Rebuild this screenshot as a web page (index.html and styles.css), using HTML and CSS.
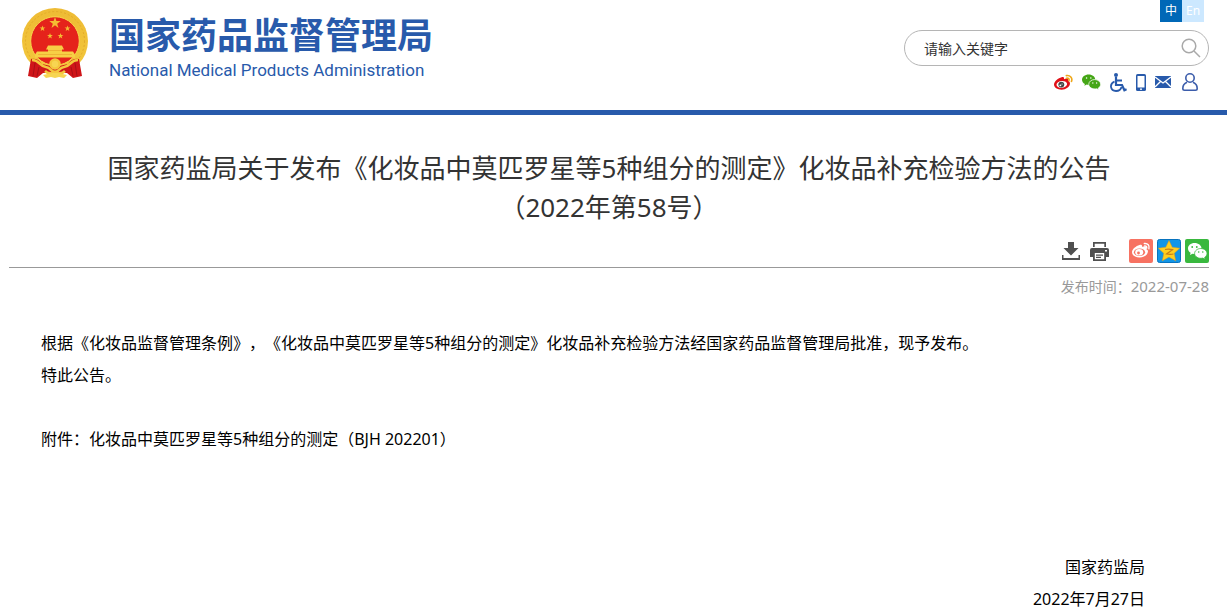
FILE: index.html
```html
<!DOCTYPE html>
<html lang="zh-CN">
<head>
<meta charset="utf-8">
<meta name="viewport" content="width=device-width, initial-scale=1">
<title>国家药品监督管理局</title>
<link rel="stylesheet" href="styles.css">
</head>
<body>
<header class="site-header">
  <a class="brand" href="#">
    <svg class="emblem" viewBox="0 0 66 71" aria-hidden="true">
      <defs>
        <linearGradient id="gold" x1="0" y1="0" x2="0" y2="1"><stop offset="0" stop-color="#eebb34"/><stop offset="1" stop-color="#f3c83c"/></linearGradient>
        <path id="star" d="M0-6 1.4-1.9H5.7L2.2.7 3.5 4.9 0 2.3-3.5 4.9-2.2.7-5.7-1.9H-1.4Z"/>
      </defs>
      <circle cx="33" cy="33" r="33" fill="url(#gold)"/>
      <circle cx="33" cy="33" r="29.5" fill="none" stroke="#e3ab2a" stroke-width="1" stroke-dasharray="2 2"/>
      <circle cx="33" cy="33" r="24.3" fill="#e5231b" stroke="#f7d64b" stroke-width="1"/>
      <g fill="#f4bd32">
        <use href="#star" transform="translate(33 15)"/>
        <use href="#star" transform="translate(20.5 20.500) scale(.52)"/>
        <use href="#star" transform="translate(45.500 20.500) scale(.52)"/>
        <use href="#star" transform="translate(28 28) scale(.52)"/>
        <use href="#star" transform="translate(38.500 28) scale(.52)"/>
      </g>
      <path fill="#f7cf45" d="M26 37.500h14l2 4h-2v2h11l2 3v3H13v-3l2-3h11v-2h-2Z"/>
      <path stroke="#e8a02a" stroke-width=".6" d="M16 46.500h34M26 42.500h14"/>
      <path fill="#cf1519" d="M9 51q7-1 11 5l13 3 13-3q4-6 11-5l3 17-9 2-6-5H21l-6 5-9-2Z"/>
      <g fill="none" stroke="#f4c73e" stroke-width="2.600">
        <circle cx="33" cy="56" r="4.500" fill="#f7d552"/>
        <path d="M10 52c8 0 7 6 14 7 5 .5 5 5 9 5s4-4.500 9-5c7-1 6-7 14-7"/>
        <path d="M23 63q4 4 10 1 6 3 10-1"/>
      </g>
      <path fill="#f7d552" d="m21 67 9-2h6l9 2-3 3-5-1-4 1-4-1-5 1Z"/>
      <path fill="none" stroke="#a90f16" d="m13 55-2 13m6-9-2 9m38-13 2 13m-6-9 2 9"/>
    </svg>
    <span class="brand-text">
      <span class="brand-cn">国家药品监督管理局</span>
      <span class="brand-en">National Medical Products Administration</span>
    </span>
  </a>
  <div class="header-tools">
    <nav class="languages" aria-label="语言">
      <a class="language language-current" href="#">中</a>
      <a class="language" href="#">En</a>
    </nav>
    <form class="search" role="search">
      <input class="search-input" type="text" aria-label="搜索" placeholder="请输入关键字">
      <button class="search-button" type="button" aria-label="搜索">
        <svg width="20" height="20" viewBox="0 0 20 20" fill="none" stroke="#a9a9a9" stroke-width="1.5"><circle cx="8" cy="8" r="6.8"/><path d="m13 13 6 6"/></svg>
      </button>
    </form>
    <nav class="quick-links" aria-label="快捷入口">
      <a href="#" aria-label="微博"><svg width="19" height="17" viewBox="0 0 20 17"><path fill="#e00f16" d="M8 3C10 2 11 3 10.500 5c3-1.400 5-.6 4.200 1.600C16 7.100 17 8 16.800 9.800 16.500 13 12.700 16 8 16c-4.400 0-8-2-8-5.300C0 7.500 4.600 3.800 8 3Z"/><ellipse cx="8.200" cy="10.500" rx="5.600" ry="3.600" fill="#fff" transform="rotate(-8 8 10.500)"/><circle cx="7.700" cy="10.700" r="3.100" fill="#444"/><circle cx="6.700" cy="11.500" r="1" fill="#fff"/><circle cx="8.500" cy="10.100" r=".6" fill="#fff"/><path fill="none" stroke="#eea719" stroke-width="1.700" stroke-linecap="round" d="M13 1.300c4-.8 6.800 2.600 5.400 6M13.200 4c2-.4 3 .8 2.500 2.500"/></svg></a>
      <a href="#" aria-label="微信"><svg width="19" height="17" viewBox="0 0 20 17"><path fill="#45a616" d="M7 0c4 0 7 2.500 7 5.500S11 11 7 11l-2-.3L2.500 12 3 10C1.200 9 0 7.300 0 5.500 0 2.500 3 0 7 0Z"/><path fill="#45a616" stroke="#fff" stroke-width=".8" d="M13.400 5.400c3.400 0 6.200 2.200 6.200 5 0 1.700-1 3-2.400 4l.4 1.700-2-1c-4.800.9-8.500-1.500-8.500-4.700 0-2.800 2.900-5 6.300-5Z"/><g fill="#fff"><circle cx="4.800" cy="3.700" r=".8"/><circle cx="9.300" cy="3.700" r=".8"/><circle cx="11.400" cy="9" r=".7"/><circle cx="15.400" cy="9" r=".7"/></g></svg></a>
      <a href="#" aria-label="无障碍"><svg width="17" height="19" viewBox="0 0 17 19" fill="none" stroke="#285aab"><circle cx="6" cy="2" r="2" fill="#285aab" stroke="none"/><path stroke-width="2.200" d="M6 4v8h6l2.400 5.300 2.200-1M6 7.500h6"/><path stroke-width="1.800" d="M4.500 8.500C-1 11 .3 18 6 18c3.200 0 5-2 5.500-4"/></svg></a>
      <a href="#" aria-label="手机"><svg width="10" height="17" viewBox="0 0 10 17"><rect width="10" height="17" rx="1.600" fill="#285aab"/><path fill="#fff" d="M1.500 2h7v11.500h-7Z"/><circle cx="5" cy="15.200" r=".9" fill="#fff"/></svg></a>
      <a href="#" aria-label="邮箱"><svg width="16" height="12" viewBox="0 0 16 12"><path fill="#285aab" d="M0 0h16v12H0Z"/><path fill="none" stroke="#fff" stroke-width="1.300" d="m0 1 8 6 8-6M0 11l5.500-5.500M16 11l-5.500-5.500"/></svg></a>
      <a href="#" aria-label="用户"><svg width="18" height="18" viewBox="-2 0 18 18" fill="none" stroke="#3c5dab" stroke-width="1.600"><circle cx="8" cy="5" r="4.200"/><path d="M5 9.300C2 10.500.8 12.500.8 15.500c0 1.200.7 1.700 1.700 1.700h11c1 0 1.700-.5 1.700-1.700 0-3-1.200-5-4.200-6.200"/></svg></a>
    </nav>
  </div>
</header>
<main class="article">
  <h1 class="title">国家药监局关于发布《化妆品中莫匹罗星等5种组分的测定》化妆品补充检验方法的公告<br>（2022年第58号）</h1>
  <div class="toolbar">
    <div class="page-tools">
      <button type="button" aria-label="下载"><svg width="18" height="18" viewBox="0 0 18 18" fill="#505050"><path d="M6 0h6v6h4.500L9 13.500 1.500 6H6Z"/><path d="M0 13h1.500v3h15v-3H18v5H0Z"/></svg></button>
      <button type="button" aria-label="打印"><svg width="19" height="19" viewBox="0 0 19 19" fill="#505050"><path d="M3 0h13v5h-1.700V1.700H4.700V5H3Z"/><path fill-rule="evenodd" d="M2 6h15q2 0 2 2v7h-3v4H3v-4H0V8q0-2 2-2Zm2.800 5v6.300h9.400V11ZM15 8v1.500h2V8Z"/><path d="M6 12.500h7v1.300H6zm0 2.300h5v1.200H6z"/></svg></button>
    </div>
    <div class="share">
      <button type="button" aria-label="分享到微博"><svg width="24" height="24" viewBox="0 0 24 24"><rect width="24" height="24" rx="2" fill="#f77262"/><path fill="#fff" d="M10.500 6c2-.7 3 .4 2.600 2 3-1 4.700-.3 4 2 1.400.5 2 1.400 1.800 2.800-.5 3.500-4.200 5.700-8.400 5.700-4 0-7.500-2-7.500-5.200C3 10 7 7 10.500 6Z"/><ellipse cx="10.500" cy="13.300" rx="5.600" ry="3.800" fill="#f77262"/><ellipse cx="10.200" cy="13.300" rx="4" ry="3.200" fill="#fff"/><circle cx="9.500" cy="14" r="1.400" fill="#f77262"/><path fill="none" stroke="#fff" stroke-width="1.400" stroke-linecap="round" d="M15.300 4.500c3.500-.5 5.500 2 4.600 5.300M15.600 7c1.700-.2 2.400.8 2.100 2.200"/></svg></button>
      <button type="button" aria-label="分享到QQ空间"><svg width="24" height="24" viewBox="0 0 24 24"><rect x=".5" y=".5" width="23" height="23" rx="2" fill="#1295e6" stroke="#0873be"/><path fill="#ffcf20" stroke="#e89b16" stroke-width=".5" d="m12 1.500 3.200 6.700 7.500 1-5.500 5.100 1.500 7.500-6.700-3.800-6.700 3.800 1.500-7.500L1.300 9.200l7.500-1Z"/><path fill="none" stroke="#c87c18" stroke-width="1.200" d="M8 10.500c3-.5 5-.5 7.500.2L9.500 15c3 .6 4.500.6 7 0"/></svg></button>
      <button type="button" aria-label="分享到微信"><svg width="24" height="24" viewBox="0 0 24 24"><rect width="24" height="24" rx="2" fill="#39b83e"/><path fill="#fff" d="M9.500 4c4 0 7 2.400 7 5.500s-3 5.500-7 5.500l-2-.3L5 16l.6-2.200C4 12.800 3 11.300 3 9.500 3 6.400 5.800 4 9.500 4Z"/><path fill="#fff" stroke="#39b83e" stroke-width=".8" d="M15.800 9.500c3.400 0 6.200 2.300 6.200 5 0 1.500-.9 2.900-2.300 3.800l.5 2-2.400-1.200c-4.300 1-8.200-1.400-8.200-4.600 0-2.700 2.800-5 6.200-5Z"/><g fill="#39b83e"><circle cx="7.200" cy="8" r=".9"/><circle cx="11.800" cy="8" r=".9"/><circle cx="13.700" cy="13" r=".8"/><circle cx="17.800" cy="13" r=".8"/></g></svg></button>
    </div>
  </div>
  <div class="published">发布时间：<time class="published-date" datetime="2022-07-28">2022-07-28</time></div>
  <div class="content">
    <p>根据《化妆品监督管理条例》，《化妆品中莫匹罗星等5种组分的测定》化妆品补充检验方法经国家药品监督管理局批准，现予发布。</p>
    <p>特此公告。</p>
    <p class="attachment">附件：<a href="#">化妆品中莫匹罗星等5种组分的测定（BJH 202201）</a></p>
    <div class="signature">
      <p>国家药监局</p>
      <p>2022年7月27日</p>
    </div>
  </div>
</main>
</body>
</html>
```

FILE: styles.css
```css
* {
  box-sizing: border-box;
}

body {
  margin: 0;
  background: #fff;
  color: #000;
  font-family: "Noto Sans", "Noto Sans CJK SC", sans-serif;
  font-size: 16px;
  text-spacing-trim: space-all;
}

a {
  color: inherit;
  text-decoration: none;
}

button {
  display: flex;
  padding: 0;
  border: 0;
  background: none;
  cursor: pointer;
}

svg {
  display: block;
}

.site-header {
  display: flex;
  justify-content: space-between;
  align-items: flex-start;
  min-height: 115px;
  padding: 0 18px 0 22px;
  border-bottom: 5px solid #285aab;
}

.brand {
  display: flex;
  gap: 21px;
  padding-top: 8px;
  color: #285aab;
}

.emblem {
  width: 66px;
  height: 71px;
}

.brand-text {
  display: flex;
  flex-direction: column;
  padding-top: 4px;
  white-space: nowrap;
}

.brand-cn {
  font-size: 36px;
  font-weight: 700;
  line-height: 48px;
}

.brand-en {
  font-family: Roboto, sans-serif;
  font-size: 17px;
  line-height: 20px;
}

.header-tools {
  display: flex;
  flex-direction: column;
  width: 305px;
}

.languages {
  display: flex;
  justify-content: flex-end;
  padding-right: 5px;
}

.language {
  width: 22px;
  background: #cce8ff;
  color: #fff;
  font-size: 12px;
  line-height: 22px;
  text-align: center;
}

.language-current {
  background: #0068b7;
}

.search {
  display: flex;
  align-items: center;
  height: 36px;
  margin-top: 8px;
  padding: 0 7px 0 19px;
  border: 1px solid #b5b5b5;
  border-radius: 18px;
}

.search-input {
  flex: 1;
  min-width: 0;
  padding: 0;
  border: 0;
  outline: 0;
  background: none;
  font-family: inherit;
  font-size: 14px;
}

.search-input::placeholder {
  color: #333;
  opacity: 1;
}

.quick-links {
  display: flex;
  justify-content: flex-end;
  align-items: center;
  gap: 9px;
  height: 20px;
  margin-top: 6px;
  padding-right: 11px;
}

.article {
  padding: 34px 18px 0 9px;
}

.title {
  margin: 0;
  color: #333;
  font-size: 26px;
  font-weight: 400;
  line-height: 39px;
  text-align: center;
}

.toolbar {
  display: flex;
  justify-content: flex-end;
  align-items: center;
  gap: 20px;
  padding: 12px 0 4px;
  border-bottom: 1px solid #999;
}

.page-tools {
  display: flex;
  align-items: center;
  gap: 10px;
}

.share {
  display: flex;
  gap: 4px;
}

.published {
  padding-top: 6px;
  color: #999;
  font-size: 14px;
  line-height: 25px;
  text-align: right;
}

.published-date {
  font-size: 15px;
}

.content {
  padding: 28px 32px 0;
  line-height: 32px;
}

.content p {
  margin: 0;
}

.content .attachment {
  margin-top: 32px;
}

.signature {
  margin-top: 96px;
  padding-right: 32px;
  text-align: right;
}
```
